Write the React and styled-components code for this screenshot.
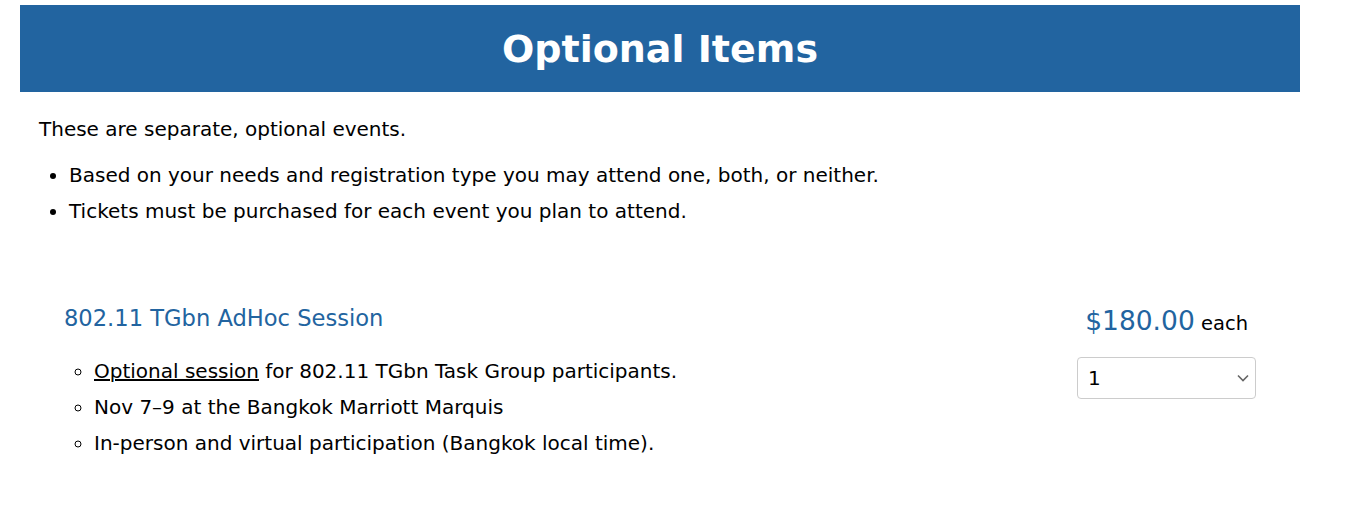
import React from 'react';
import styled, { createGlobalStyle } from 'styled-components';

const GlobalStyle = createGlobalStyle`
  body {
    margin: 0;
    background: #fff;
    font-family: "DejaVu Sans", Verdana, sans-serif;
    color: #000;
  }
`
const Page = styled.div`
  width: 1280px;
  padding: 5px 0 0 20px;
`
const Header = styled.header`
  height: 87px;
  display: flex;
  align-items: center;
  justify-content: center;
  background-color: #2264a0;
`
const Title = styled.h1`
  margin: 0;
  font-size: 38px;
  font-weight: 700;
  color: #fff;
`
const Body = styled.section`
  padding: 0 19px;
`
const Intro = styled.p`
  margin: 23px 0 0;
  font-size: 20px;
  line-height: 28px;
`
const BulletList = styled.ul`
  margin: 14px 0 0;
  padding-left: 30px;
  list-style: ${(p) => p.$type || 'disc'};
  font-size: 20px;
  line-height: 36px;
`
const Event = styled.div`
  display: flex;
  justify-content: space-between;
  align-items: flex-start;
  margin-top: 74px;
  padding: 0 25px;
`
const EventInfo = styled.div``
const EventName = styled.h2`
  margin: 0;
  font-size: 22.6px;
  font-weight: 400;
  line-height: 30px;
  color: #2264a0;
`
const SubList = styled(BulletList)`
  margin-top: 20px;
`
const Link = styled.a`
  color: #000;
  text-decoration: underline;
`
const PriceBox = styled.div`
  display: flex;
  flex-direction: column;
  align-items: flex-end;
  width: 180px;
`
const Price = styled.div`
  font-size: 19.5px;
  line-height: 36px;
  padding-right: 8px;
`
const Amount = styled.span`
  font-size: 26.5px;
  color: #2264a0;
`
const Select = styled.select`
  margin-top: 15px;
  width: 179px;
  height: 42px;
  padding: 0 10px;
  border: 1px solid #ccc;
  border-radius: 4px;
  background: #fff url("data:image/svg+xml,%3Csvg xmlns='http://www.w3.org/2000/svg' width='12' height='8' viewBox='0 0 12 8'%3E%3Cpath d='M1 1.5l5 5 5-5' fill='none' stroke='%23666' stroke-width='1.6'/%3E%3C/svg%3E") no-repeat right 6px center;
  appearance: none;
  font-family: "DejaVu Sans", Verdana, sans-serif;
  font-size: 20px;
  color: #000;
`

export default function App() {
  return (
    <>
      <GlobalStyle />
      <Page>
        <Header>
          <Title>Optional Items</Title>
        </Header>
        <Body>
          <Intro>These are separate, optional events.</Intro>
          <BulletList>
            <li>Based on your needs and registration type you may attend one, both, or neither.</li>
            <li>Tickets must be purchased for each event you plan to attend.</li>
          </BulletList>
          <Event>
            <EventInfo>
              <EventName>802.11 TGbn AdHoc Session</EventName>
              <SubList $type="circle">
                <li><Link href="#">Optional session</Link> for 802.11 TGbn Task Group participants.</li>
                <li>Nov 7–9 at the Bangkok Marriott Marquis</li>
                <li>In-person and virtual participation (Bangkok local time).</li>
              </SubList>
            </EventInfo>
            <PriceBox>
              <Price><Amount>$180.00</Amount> each</Price>
              <Select defaultValue="1">
                <option value="0">0</option>
                <option value="1">1</option>
                <option value="2">2</option>
              </Select>
            </PriceBox>
          </Event>
        </Body>
      </Page>
    </>
  );
}
